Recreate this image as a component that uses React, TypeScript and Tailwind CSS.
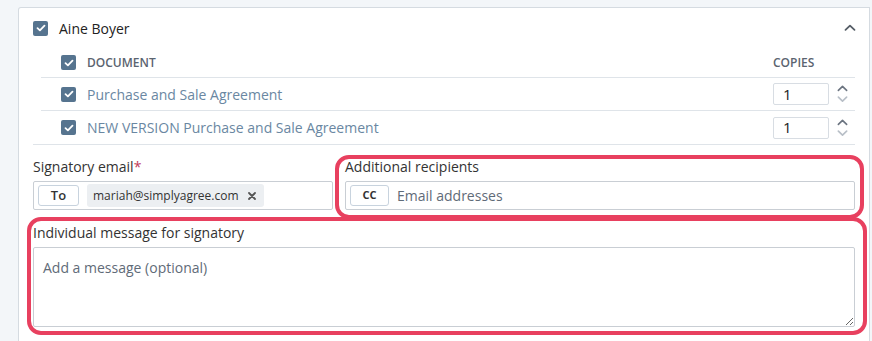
import React from "react";

function Check() {
  return (
    <span className="flex h-[15px] w-[15px] shrink-0 items-center justify-center rounded-[2px] bg-[#56748f]">
      <svg width="10" height="8" viewBox="0 0 10 8" fill="none">
        <path d="M1.5 4.2 L3.9 6.4 L8.5 1.6" stroke="#fff" strokeWidth="1.8" strokeLinecap="round" strokeLinejoin="round" />
      </svg>
    </span>
  );
}

function Chevron({ up, color, size = 12 }: { up?: boolean; color: string; size?: number }) {
  return (
    <svg width={size} height={size * 0.6} viewBox="0 0 12 7" fill="none">
      <path
        d={up ? "M1.5 5.8 L6 1.5 L10.5 5.8" : "M1.5 1.2 L6 5.5 L10.5 1.2"}
        stroke={color}
        strokeWidth="1.8"
        strokeLinecap="round"
        strokeLinejoin="round"
      />
    </svg>
  );
}

function Copies() {
  return (
    <div className="flex w-[82px] items-center">
      <div className="flex h-[22px] w-[56px] items-center rounded-[2px] border border-[#d8dde3] pl-[9px] text-[15px] text-[#222]">
        1
      </div>
      <div className="ml-[8px] flex flex-col items-center gap-[4px]">
        <Chevron up color="#6b7480" size={11} />
        <Chevron color="#b8bfc7" size={11} />
      </div>
    </div>
  );
}

const docs = ["Purchase and Sale Agreement", "NEW VERSION Purchase and Sale Agreement"];

export default function App() {
  return (
    <div
      className="h-[341px] overflow-hidden bg-[#f3f6f9] pl-[18px] pr-[2px] pt-[7px]"
      style={{ fontFamily: '"Open Sans", "Liberation Sans", sans-serif' }}
    >
      <div className="relative h-[340px] rounded-tl-[3px] border border-b-0 border-[#d5dbe1] bg-white">
        {/* signer header */}
        <div className="flex h-[40px] items-center pl-[14px] pr-[13px]">
          <Check />
          <span className="ml-[11px] text-[14px] text-[#222]">Aine Boyer</span>
          <span className="ml-auto">
            <Chevron up color="#555d66" size={12} />
          </span>
        </div>

        {/* documents */}
        <div className="mx-[14px] border-b border-[#dfe4e9]">
          <div className="ml-[8px]">
            <div className="flex h-[30px] items-center border-b border-[#dfe4e9] pl-[20px]">
              <Check />
              <span className="ml-[11px] flex-1 text-[12px] font-semibold text-[#5b6470]">DOCUMENT</span>
              <span className="w-[82px] text-[12px] font-semibold text-[#5b6470]">COPIES</span>
            </div>
            {docs.map((d, i) => (
              <div
                key={d}
                className={`flex h-[33px] items-center pl-[20px] ${i === 0 ? "border-b border-[#dfe4e9]" : ""}`}
              >
                <Check />
                <span className="ml-[11px] flex-1 text-[14px] text-[#6a87a2]">{d}</span>
                <Copies />
              </div>
            ))}
          </div>
        </div>

        {/* email fields */}
        <div className="px-[14px] pt-[11px]">
          <div className="grid grid-cols-[300px_1fr] gap-x-[12px]">
            <div>
              <div className="h-[22px] text-[14px] leading-[22px] text-[#333]">
                Signatory email<span className="text-[#c0395a]">*</span>
              </div>
              <div className="mt-[3px] flex h-[29px] items-center rounded-[2px] border border-[#c9ced4] pl-[4px]">
                <span className="flex h-[21px] w-[41px] items-center justify-center rounded-[3px] border border-[#c8d3de] text-[13px] font-semibold text-[#333]">
                  To
                </span>
                <span className="ml-[8px] flex h-[23px] items-center gap-[9px] rounded-[3px] bg-[#eceff2] pl-[6px] pr-[8px] text-[12px] text-[#333]">
                  mariah@simplyagree.com
                  <svg width="8" height="8" viewBox="0 0 8 8" fill="none">
                    <path d="M1 1 L7 7 M7 1 L1 7" stroke="#555" strokeWidth="1.8" strokeLinecap="round" />
                  </svg>
                </span>
              </div>
            </div>
            <div>
              <div className="h-[22px] text-[14px] leading-[22px] text-[#333]">Additional recipients</div>
              <div className="mt-[3px] flex h-[29px] items-center rounded-[2px] border border-[#c9ced4] pl-[4px]">
                <span className="flex h-[21px] w-[39px] items-center justify-center rounded-[3px] border border-[#c8d3de] text-[11px] font-bold text-[#333]">
                  CC
                </span>
                <span className="ml-[8px] text-[14px] text-[#5f6b78]">Email addresses</span>
              </div>
            </div>
          </div>

          <div className="mt-[12px] h-[22px] text-[14px] leading-[22px] text-[#333]">
            Individual message for signatory
          </div>
          <textarea
            placeholder="Add a message (optional)"
            className="mt-[3px] block h-[80px] w-full resize-y rounded-[2px] border border-[#c9ced4] px-[9px] py-[9px] text-[14px] text-[#333] placeholder:text-[#5f6b78] focus:outline-none"
          />
        </div>

        {/* annotation highlights */}
        <div className="pointer-events-none absolute left-[316px] top-[147px] h-[64px] w-[529px] rounded-[14px] border-[4px] border-[#e8405f]" />
        <div className="pointer-events-none absolute left-[8px] top-[209px] h-[118px] w-[840px] rounded-[14px] border-[4px] border-[#e8405f]" />
      </div>
    </div>
  );
}
